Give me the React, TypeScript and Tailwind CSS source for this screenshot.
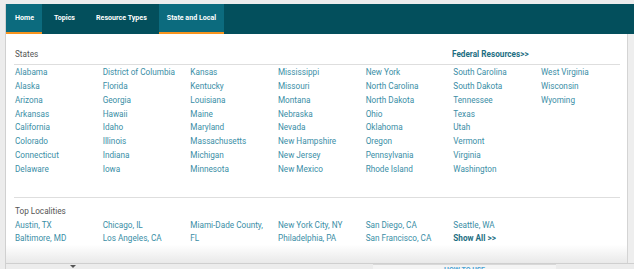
import React from 'react';

const states = [
  ['Alabama', 'Alaska', 'Arizona', 'Arkansas', 'California', 'Colorado', 'Connecticut', 'Delaware'],
  ['District of Columbia', 'Florida', 'Georgia', 'Hawaii', 'Idaho', 'Illinois', 'Indiana', 'Iowa'],
  ['Kansas', 'Kentucky', 'Louisiana', 'Maine', 'Maryland', 'Massachusetts', 'Michigan', 'Minnesota'],
  ['Mississippi', 'Missouri', 'Montana', 'Nebraska', 'Nevada', 'New Hampshire', 'New Jersey', 'New Mexico'],
  ['New York', 'North Carolina', 'North Dakota', 'Ohio', 'Oklahoma', 'Oregon', 'Pennsylvania', 'Rhode Island'],
  ['South Carolina', 'South Dakota', 'Tennessee', 'Texas', 'Utah', 'Vermont', 'Virginia', 'Washington'],
  ['West Virginia', 'Wisconsin', 'Wyoming'],
];

const localities = [
  ['Austin, TX', 'Baltimore, MD'],
  ['Chicago, IL', 'Los Angeles, CA'],
  ['Miami-Dade County, FL'],
  ['New York City, NY', 'Philadelphia, PA'],
  ['San Diego, CA', 'San Francisco, CA'],
  ['Seattle, WA'],
];

const App = () => {
  return (
    <div
      className="relative w-[634px] h-[269px] overflow-hidden bg-[#ececec] pt-[4px]"
      style={{ fontFamily: 'Roboto, "Liberation Sans", sans-serif' }}
    >
      <div className="ml-[5px] border-l border-[#d0d0d0]">
        {/* Nav */}
        <nav className="flex h-[30px] bg-[#034f5c] text-[7.1px] font-bold text-white">
          <a className="flex items-center pl-[9px] pr-[8px] bg-[#0c6b7e] border-b-2 border-[#f7931e]">Home</a>
          <a className="flex items-center pl-[12px] pr-[13px] border-b-2 border-transparent">Topics</a>
          <a className="flex items-center pl-[8px] pr-[12px] border-b-2 border-transparent">Resource Types</a>
          <a className="flex items-center px-[8px] bg-[#0c6b7e] border-b-2 border-[#f7931e]">State and Local</a>
        </nav>

        {/* Dropdown panel */}
        <div className="flex">
          <div className="w-[622px] h-[229px] border-r border-[#d4d4d4] bg-gradient-to-b from-white from-[92%] to-[#e9e9e9] pl-[8px] pr-[7px] pt-[13px]">
            <div className="flex items-center justify-between h-[14px] text-[8.2px]">
              <span className="text-[#555] pl-[1px]">States</span>
              <a className="w-[168px] font-bold text-[#1d6e82]">Federal Resources&gt;&gt;</a>
            </div>
            <div className="mt-[3px] border-t border-[#dedede]" />
            <div className="grid grid-cols-[repeat(7,87.67px)] pl-[1px] pt-[1px] text-[8.2px] leading-[13.85px] text-[#3a8ea6]">
              {states.map((col, i) => (
                <div key={i} className="flex flex-col">
                  {col.map((s) => (
                    <a key={s}>{s}</a>
                  ))}
                </div>
              ))}
            </div>
            <div className="mt-[20px] border-t border-[#dedede]" />
            <div className="pl-[1px] pt-[7px] text-[8.2px] leading-[13.85px]">
              <div className="text-[#555]">Top Localities</div>
              <div className="grid grid-cols-[repeat(7,87.67px)] text-[#3a8ea6]">
                {localities.map((col, i) => (
                  <div key={i} className={`flex flex-col ${i === 2 ? 'pr-[10px]' : ''}`}>
                    {col.map((s) => (
                      <a key={s}>{s}</a>
                    ))}
                    {i === 5 && <a className="font-bold text-[#1d6e82]">Show All &gt;&gt;</a>}
                  </div>
                ))}
              </div>
            </div>
          </div>
          <div className="flex-1 bg-[#eeeeee]" />
        </div>

        {/* Under-panel bits */}
        <div className="relative flex h-[6px] border-t border-[#cfcfcf]">
          <span className="absolute left-[64px] top-[1px] w-0 h-0 border-l-[3px] border-r-[3px] border-t-[3px] border-l-transparent border-r-transparent border-t-[#555]" />
          <div className="absolute left-[367px] top-0 w-[183px] h-[6px] bg-[#f4f4f4] border-t border-[#d8d8d8] flex justify-center">
            <span className="text-[7px] font-bold text-[#4aa3d4] leading-[10px]">HOW TO USE</span>
          </div>
        </div>
      </div>
    </div>
  );
};

export default App;
